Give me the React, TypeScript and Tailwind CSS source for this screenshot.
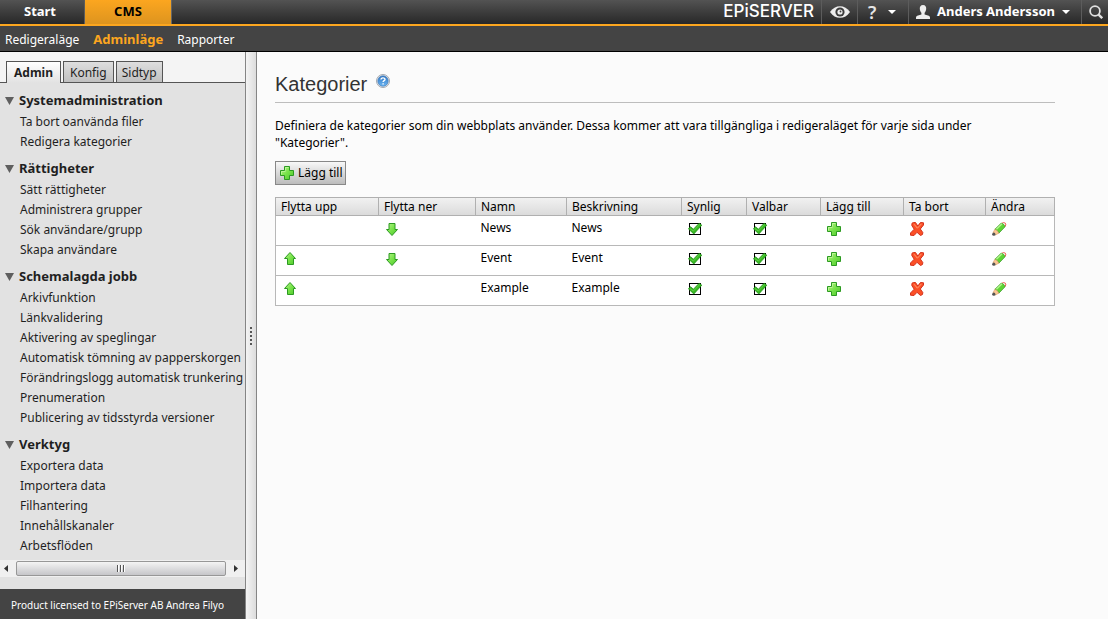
import type { ReactNode } from "react";

interface MenuGroup {
    title: string;
    items: string[];
}

interface Category {
    name: string;
    description: string;
    up: boolean;
    down: boolean;
}

const menu: MenuGroup[] = [
    { title: "Systemadministration", items: ["Ta bort oanvända filer", "Redigera kategorier"] },
    {
        title: "Rättigheter",
        items: ["Sätt rättigheter", "Administrera grupper", "Sök användare/grupp", "Skapa användare"],
    },
    {
        title: "Schemalagda jobb",
        items: [
            "Arkivfunktion",
            "Länkvalidering",
            "Aktivering av speglingar",
            "Automatisk tömning av papperskorgen",
            "Förändringslogg automatisk trunkering",
            "Prenumeration",
            "Publicering av tidsstyrda versioner",
        ],
    },
    {
        title: "Verktyg",
        items: ["Exportera data", "Importera data", "Filhantering", "Innehållskanaler", "Arbetsflöden"],
    },
];

const categories: Category[] = [
    { name: "News", description: "News", up: false, down: true },
    { name: "Event", description: "Event", up: true, down: true },
    { name: "Example", description: "Example", up: true, down: false },
];

const columns = [
    { label: "Flytta upp", width: "w-[103px]" },
    { label: "Flytta ner", width: "w-[97px]" },
    { label: "Namn", width: "w-[91px]" },
    { label: "Beskrivning", width: "w-[115px]" },
    { label: "Synlig", width: "w-[65px]" },
    { label: "Valbar", width: "w-[74px]" },
    { label: "Lägg till", width: "w-[83px]" },
    { label: "Ta bort", width: "w-[82px]" },
    { label: "Ändra", width: "w-[69px]" },
];

const Gradients = () => (
    <svg className="absolute size-0" aria-hidden="true">
        <defs>
            <linearGradient id="green" x1="0" y1="0" x2="1" y2="1">
                <stop offset="0" stopColor="#b9f58c" />
                <stop offset="0.5" stopColor="#78e34a" />
                <stop offset="1" stopColor="#4cc72b" />
            </linearGradient>
            <linearGradient id="blue" x1="0" y1="0" x2="0" y2="1">
                <stop offset="0" stopColor="#2f76c4" />
                <stop offset="1" stopColor="#6db6f2" />
            </linearGradient>
        </defs>
    </svg>
);

const PlusIcon = () => (
    <svg viewBox="0 0 16 16" className="block size-4" aria-hidden="true">
        <path d="M5.5 1.5h5v4h4v5h-4v4h-5v-4h-4v-5h4z" fill="url(#green)" stroke="#2c9a22" />
        <path d="M6.5 5.5v-3h3M2.5 9.5v-3h4" fill="none" stroke="#cdf9ab" opacity=".7" />
    </svg>
);

const UpIcon = () => (
    <svg viewBox="0 0 16 16" className="block size-4" aria-hidden="true">
        <path d="M8 1.5 13.5 7.5h-2v6h-6v-6h-3z" fill="url(#green)" stroke="#2c9a22" />
    </svg>
);

const DownIcon = () => (
    <svg viewBox="0 0 16 16" className="block size-4" aria-hidden="true">
        <path d="M8 14.5 13.5 8.5h-2.5v-6h-6v6h-2.5z" fill="url(#green)" stroke="#2c9a22" />
    </svg>
);

const DeleteIcon = () => (
    <svg viewBox="0 0 16 16" className="block size-4" aria-hidden="true">
        <path
            d="M4.5 1.5 6.5 1.5 8.8 5 11.5 1.5 14.5 1.8 14.5 4 11.3 8 13.8 11.5 13.5 13.5 11.5 14.5 8 11.3 5 14.5 1.5 14.2 1.5 12 5.2 8.2 2.8 4.5 3 2.2z"
            fill="#fb4f26"
            stroke="#d4321c"
            strokeLinejoin="round"
        />
        <path d="M5 3.2 8.4 7.2 12.5 2.8" fill="none" stroke="#ff9a72" />
    </svg>
);

const PencilIcon = () => (
    <svg viewBox="0 0 16 16" className="block size-4" aria-hidden="true">
        <path d="M10.5 2.5Q12.5.8 14.4 2.2 15.6 3.8 13.8 5.8z" fill="#fff" stroke="#ee5a50" />
        <path d="M3.8 8.4 10.2 2.2Q13.2 2.6 14 5.8L7.8 12.2Q6.8 9.2 3.8 8.4z" fill="#5cd434" stroke="#3d9e2a" strokeWidth=".8" />
        <path d="M5.4 8.2 11 2.8" stroke="#b5f58e" strokeWidth="1.4" />
        <path d="M3.8 8.4Q6.8 9.2 7.8 12.2L4.4 14 2 11.8z" fill="#fbc795" stroke="#d99a62" strokeWidth=".6" />
        <circle cx="2.8" cy="13.2" r="1.6" fill="#555" />
    </svg>
);

const HelpIcon = () => (
    <svg viewBox="0 0 14 14" className="block size-[14px]" aria-hidden="true">
        <circle cx="7" cy="7" r="6.5" fill="#e4e6ea" stroke="#a3a8b0" />
        <circle cx="7" cy="7" r="5.2" fill="url(#blue)" stroke="#3d79b8" strokeWidth=".6" />
        <path
            d="M5 5.6C5 3.3 9 3.3 9 5.4 9 6.7 7.1 6.7 7.1 8M7.1 9.2v1.3"
            fill="none"
            stroke="#fff"
            strokeWidth="1.4"
        />
    </svg>
);

const EyeIcon = () => (
    <svg viewBox="0 0 20 12" className="block h-3 w-5" aria-hidden="true">
        <path d="M0 6C5-1.8 15-1.8 20 6 15 13.8 5 13.8 0 6z" fill="#ededed" />
        <circle cx="10" cy="6" r="4.6" fill="#3c3c3c" />
        <circle cx="10" cy="6" r="2.6" fill="#ededed" />
        <circle cx="10.5" cy="5.5" r=".9" fill="#3c3c3c" />
    </svg>
);

const UserIcon = () => (
    <svg viewBox="0 0 14 14" className="block size-[14px]" aria-hidden="true">
        <path
            d="M7 0C9.4 0 10.4 1.7 10.2 4 10 6 9.3 7 8.6 7.8V9.4L12.8 10.8Q14 11.3 14 12.6V14H0V12.6Q0 11.3 1.2 10.8L5.4 9.4V7.8C4.7 7 4 6 3.8 4 3.6 1.7 4.6 0 7 0z"
            fill="#ededed"
        />
    </svg>
);

const SearchIcon = () => (
    <svg viewBox="0 0 14 14" className="block size-[14px]" aria-hidden="true">
        <circle cx="6" cy="6" r="4.9" fill="none" stroke="#e0e0e0" strokeWidth="1.8" />
        <path d="M9.6 9.6 13.2 13.2" stroke="#e0e0e0" strokeWidth="2.4" />
    </svg>
);

const Caret = () => (
    <svg viewBox="0 0 8 4" className="block h-1 w-2" aria-hidden="true">
        <path d="M0 0h8L4 4z" fill="#fff" />
    </svg>
);

const CheckBox = ({ label }: { label: string }) => (
    <label className="relative block size-4 p-[2px]">
        <input
            type="checkbox"
            defaultChecked
            aria-label={label}
            className="peer block size-3 appearance-none border border-black bg-white"
        />
        <svg viewBox="0 0 16 16" className="absolute inset-0 hidden size-4 peer-checked:block" aria-hidden="true">
            <path d="M1.4 7.8 3.6 5.8 6.4 8.2 12.2 2.2 14.8 4.2 6.8 13z" fill="#37b722" stroke="#1f8f17" strokeWidth=".8" strokeLinejoin="round" />
            <path d="M3 7.6 6.4 10 12.8 3.4" fill="none" stroke="#6ad84c" strokeWidth=".8" />
        </svg>
    </label>
);

const IconButton = ({ label, children }: { label: string; children: ReactNode }) => (
    <button type="button" aria-label={label} className="block">
        {children}
    </button>
);

const Header = () => (
    <header>
        <nav className="flex h-[26px] items-stretch border-b-2 border-[#fca61f] bg-linear-to-b from-[#535353] to-[#282828] text-white">
            <a href="#start" className="flex w-[85px] items-center justify-center border-r border-[#5c5c5c] pr-1 text-[13px] font-bold">
                Start
            </a>
            <a href="#cms" className="flex w-[87px] items-center justify-center border-r border-[#666] bg-linear-to-b from-[#fca61f] to-[#dd941f] text-[13px] font-bold text-black">
                CMS
            </a>
            <a href="#episerver" className="ml-auto flex items-center pr-[7px] font-['Inter',sans-serif] text-[17px] font-medium">
                EPiSERVER
            </a>
            <button type="button" aria-label="Förhandsgranska" className="flex w-9 items-center justify-center border-l border-[#5c5c5c]">
                <EyeIcon />
            </button>
            <button type="button" aria-label="Hjälp" className="flex w-[51px] items-center gap-3 border-l border-[#5c5c5c] pl-[10px] text-lg font-semibold text-[#e6e6e6]">
                ?
                <Caret />
            </button>
            <button type="button" className="flex w-[173px] items-center justify-between border-l border-[#5c5c5c] pr-[11px] pl-[7px] text-[13px] font-bold">
                <UserIcon />
                Anders Andersson
                <Caret />
            </button>
            <button type="button" aria-label="Sök" className="flex w-[27px] items-center border-l border-[#5c5c5c] pl-[7px]">
                <SearchIcon />
            </button>
        </nav>
        <nav className="flex h-[26px] items-center gap-[14px] border-b border-black bg-[#444] pt-[2px] pl-[5px] text-xs text-white">
            <a href="#redigera">Redigeraläge</a>
            <a href="#admin" className="text-[13px] font-bold text-[#fca61f]">Adminläge</a>
            <a href="#rapporter">Rapporter</a>
        </nav>
    </header>
);

const Sidebar = () => (
    <aside className="flex w-[245px] shrink-0 flex-col overflow-hidden bg-[#e2e2e2] text-[#1f1f1f]">
        <div className="flex h-[31px] items-end gap-[2px] border-b border-[#555] bg-[#f4f4f4] pl-[6px] text-xs">
            <button type="button" className="-mb-px h-[22px] border border-b-0 border-[#555] bg-linear-to-b from-white to-[#e2e2e2] px-[7px] pt-px font-bold">
                Admin
            </button>
            <button type="button" className="h-[21px] border border-b-0 border-[#555] bg-linear-to-b from-[#dedede] to-[#c0c0c0] px-[6px] pt-[2px]">
                Konfig
            </button>
            <button type="button" className="h-[21px] border border-b-0 border-[#555] bg-linear-to-b from-[#dedede] to-[#c0c0c0] px-[5px] pt-[2px]">
                Sidtyp
            </button>
        </div>
        <div className="pt-[7px]">
            {menu.map((group) => (
                <section key={group.title} className="mb-[6px] last:mb-0">
                    <h2 className="flex h-[22px] items-center gap-[5px] pl-[5px] text-[13px] font-bold">
                        <svg viewBox="0 0 9 8" className="block h-2 w-[9px]" aria-hidden="true">
                            <path d="M0 0h9L4.5 8z" fill="#5f5f5f" />
                        </svg>
                        {group.title}
                    </h2>
                    <ul className="pl-5 text-xs leading-5 whitespace-nowrap">
                        {group.items.map((item) => (
                            <li key={item}>
                                <a href="#menu">{item}</a>
                            </li>
                        ))}
                    </ul>
                </section>
            ))}
        </div>
        <div className="mt-1 flex h-[17px] items-center bg-[#f0f0f0]">
            <button type="button" aria-label="Rulla vänster" className="flex w-4 pl-1">
                <svg viewBox="0 0 4 7" className="block h-[7px] w-1" aria-hidden="true">
                    <path d="M4 0v7L0 3.5z" fill="#333" />
                </svg>
            </button>
            <div className="flex h-[15px] w-[210px] items-center justify-center gap-px rounded-xs border border-[#979797] bg-linear-to-b from-[#f4f4f4] to-[#c6c6c9]">
                <span className="h-[7px] w-[2px] border-l border-[#555] bg-white" />
                <span className="h-[7px] w-[2px] border-l border-[#555] bg-white" />
                <span className="h-[7px] w-[2px] border-l border-[#555] bg-white" />
            </div>
            <button type="button" aria-label="Rulla höger" className="flex grow justify-center">
                <svg viewBox="0 0 4 7" className="block h-[7px] w-1" aria-hidden="true">
                    <path d="M0 0v7l4-3.5z" fill="#333" />
                </svg>
            </button>
        </div>
        <footer className="mt-auto flex h-[30px] items-center bg-[#444] pt-[2px] pl-[11px] text-[10px] whitespace-nowrap text-white">
            Product licensed to EPiServer AB Andrea Filyo
        </footer>
    </aside>
);

const CategoryTable = () => (
    <table className="mt-3 w-full table-fixed border-collapse border border-[#b8b8b8] bg-white text-left text-xs">
        <thead>
            <tr className="h-[18px] bg-linear-to-b from-[#f1f1f1] to-[#dadada]">
                {columns.map((column) => (
                    <th key={column.label} scope="col" className={`${column.width} border border-[#b0b0b0] pl-[5px] leading-[17px] font-normal`}>
                        {column.label}
                    </th>
                ))}
            </tr>
        </thead>
        <tbody>
            {categories.map((category) => (
                <tr key={category.name} className="h-[30px] border-b border-[#b8b8b8] align-top">
                    <td className="pt-[5px] pl-[6px]">
                        {category.up && <IconButton label="Flytta upp"><UpIcon /></IconButton>}
                    </td>
                    <td className="pt-[5px] pl-[5px]">
                        {category.down && <IconButton label="Flytta ner"><DownIcon /></IconButton>}
                    </td>
                    <td className="pt-1 pl-[5px] leading-4">{category.name}</td>
                    <td className="pt-1 pl-[5px] leading-4">{category.description}</td>
                    <td className="pt-[5px] pl-[5px]"><CheckBox label="Synlig" /></td>
                    <td className="pt-[5px] pl-[5px]"><CheckBox label="Valbar" /></td>
                    <td className="pt-[5px] pl-[5px]"><IconButton label="Lägg till"><PlusIcon /></IconButton></td>
                    <td className="pt-[5px] pl-[5px]"><IconButton label="Ta bort"><DeleteIcon /></IconButton></td>
                    <td className="pt-[5px] pl-[5px]"><IconButton label="Ändra"><PencilIcon /></IconButton></td>
                </tr>
            ))}
        </tbody>
    </table>
);

const App = () => {
    return (
        <div className="flex min-h-screen flex-col bg-[#fbfbfb] font-['Noto_Sans','DejaVu_Sans',sans-serif] text-black">
            <Gradients />
            <Header />
            <div className="flex grow">
                <Sidebar />
                <div className="flex w-3 shrink-0 flex-col items-center justify-center gap-[2px] border-x border-[#858585] bg-linear-to-r from-[#f4f4f4] to-[#dcdcdc]">
                    <span className="size-[2px] bg-[#555]" />
                    <span className="size-[2px] bg-[#555]" />
                    <span className="size-[2px] bg-[#555]" />
                    <span className="size-[2px] bg-[#555]" />
                    <span className="size-[2px] bg-[#555]" />
                </div>
                <main className="min-w-0 grow pt-5 pr-[53px] pl-[18px]">
                    <div className="flex h-[31px] items-start gap-[9px] border-b border-[#bdbdbd]">
                        <h1 className="font-['Liberation_Sans',Arial,sans-serif] text-xl leading-6 text-[#333]">Kategorier</h1>
                        <button type="button" aria-label="Hjälp" className="mt-[2px]">
                            <HelpIcon />
                        </button>
                    </div>
                    <p className="mt-[14px] max-w-[740px] text-xs leading-[17px]">
                        Definiera de kategorier som din webbplats använder. Dessa kommer att vara tillgängliga i redigeraläget för varje sida under "Kategorier".
                    </p>
                    <button type="button" className="mt-[10px] flex h-6 items-center gap-[3px] border border-[#888] bg-linear-to-b from-[#f8f8f8] to-[#bcbcbc] pr-[2px] pl-[3px] text-xs">
                        <PlusIcon />
                        Lägg till
                    </button>
                    <CategoryTable />
                </main>
            </div>
        </div>
    );
};

export default App;
